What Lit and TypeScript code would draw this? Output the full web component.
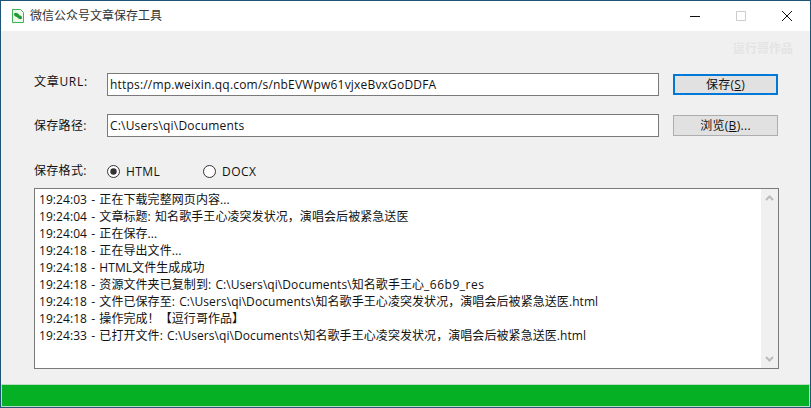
import { LitElement, html, css } from "lit";
import { customElement } from "lit/decorators.js";

const LOGS = [
  html`19:24:03 - 正在下载完整网页内容...`,
  html`19:24:04 - 文章标题: 知名歌手王心凌突发状况，演唱会后被紧急送医`,
  html`19:24:04 - 正在保存...`,
  html`19:24:18 - 正在导出文件...`,
  html`19:24:18 - HTML文件生成成功`,
  html`19:24:18 - 资源文件夹已复制到: C:\\Users\\qi\\Documents\\知名歌手王心<span class="tail">_66b9_res</span>`,
  html`19:24:18 - 文件已保存至: C:\\Users\\qi\\Documents\\知名歌手王心凌突发状况，演唱会后被紧急送医.html`,
  html`19:24:18 - 操作完成！【逗行哥作品】`,
  html`19:24:33 - 已打开文件: C:\\Users\\qi\\Documents\\知名歌手王心凌突发状况，演唱会后被紧急送医.html`,
];

@customElement("app-root")
export class AppRoot extends LitElement {
  static styles = css`
    :host {
      display: block;
      width: 811px;
      height: 408px;
      font-family: "Open Sans", "Noto Sans CJK SC", sans-serif;
      font-size: 12px;
      color: #111;
    }
    * { box-sizing: border-box; }
    .window {
      width: 811px;
      height: 408px;
      border: 1px solid #1d5478;
      background: #f0f0f0;
      display: flex;
      flex-direction: column;
    }
    .titlebar {
      height: 30px;
      background: #fff;
      display: flex;
      align-items: center;
      flex: none;
    }
    .appicon { margin-left: 10px; width: 14px; height: 14px; flex: none; display: block; }
    .title { margin-left: 5px; font-size: 12px; color: #333; line-height: 16px; }
    .caption { margin-left: auto; display: flex; }
    .cap { width: 46px; height: 30px; display: flex; align-items: center; justify-content: center; }
    .watermark {
      height: 42px;
      padding: 10px 17px 0 0;
      text-align: right;
      font-size: 12px;
      font-weight: 700;
      line-height: 16px;
      color: #e4e4e4;
      flex: none;
    }
    .content { padding: 0 32px 0 33px; flex: 1; display: flex; flex-direction: column; }
    .row { display: flex; align-items: center; height: 23px; }
    .row + .row { margin-top: 18px; }
    .label { width: 73px; flex: none; line-height: 16px; letter-spacing: 0.3px; }
    .label.up { margin-bottom: 6px; letter-spacing: 0.7px; }
    .field {
      width: 552px;
      height: 23px;
      border: 1px solid #7a7a7a;
      background: #fff;
      padding: 0 2px;
      line-height: 21px;
      font-size: 12px;
      letter-spacing: 0.19px;
      flex: none;
      white-space: nowrap;
      overflow: hidden;
    }
    .btn {
      margin-left: 14px;
      width: 105px;
      height: 21px;
      border: 1px solid #adadad;
      background: #e1e1e1;
      text-align: center;
      line-height: 19px;
      font-size: 12px;
      letter-spacing: 0.3px;
      flex: none;
      white-space: nowrap;
    }
    .btn.primary { border: 2px solid #0078d7; line-height: 17px; }
    u { text-underline-offset: 1px; }
    .format { display: flex; align-items: flex-start; height: 19px; margin-top: 23px; }
    .format .label { width: 73px; margin-top: 3px; }
    .radio { display: flex; align-items: center; width: 96px; height: 19px; padding-top: 3px; letter-spacing: 0.45px; }
    .dot { width: 13px; height: 13px; display: block; flex: none; margin-right: 6px; }
    .log {
      margin-top: 9px;
      width: 745px;
      height: 181px;
      border: 1px solid #7a7a7a;
      background: #fff;
      display: flex;
      overflow: hidden;
      flex: none;
    }
    .lines { flex: 1; padding: 2px 0 0 4px; font-size: 12px; line-height: 17px; min-width: 0; letter-spacing: 0.07px; word-spacing: 1px; }
    .line { white-space: nowrap; height: 17px; }
    .tail { letter-spacing: 0.5px; }
    .scroll {
      width: 17px;
      flex: none;
      background: #f0f0f0;
      display: flex;
      flex-direction: column;
      justify-content: space-between;
      align-items: center;
      padding: 6px 0;
    }
    .scroll svg { display: block; }
    .progress {
      height: 23px;
      flex: none;
      background: #06b025;
      border: 1px solid #bcdcc2;
    }
  `;

  render() {
    return html`
      <div class="window">
        <div class="titlebar">
          <svg class="appicon" viewBox="0 0 14 14">
            <path d="M1.5 .5H9.5L12.5 3.5V13.5H1.5Z" fill="#eef8ee" stroke="#3db54a"/>
            <ellipse cx="5.6" cy="6" rx="2.8" ry="1.9" transform="rotate(25 5.6 6)" fill="#1f9a35"/>
            <ellipse cx="8.6" cy="8.2" rx="2.6" ry="1.8" transform="rotate(25 8.6 8.2)" fill="#1f9a35"/>
          </svg>
          <div class="title">微信公众号文章保存工具</div>
          <div class="caption">
            <div class="cap">
              <svg width="10" height="10" viewBox="0 0 10 10"><path d="M0 5.5H10" stroke="#111" fill="none"/></svg>
            </div>
            <div class="cap">
              <svg width="10" height="10" viewBox="0 0 10 10"><path d="M.5 .5H9.5V9.5H.5Z" stroke="#ccc" fill="none"/></svg>
            </div>
            <div class="cap">
              <svg width="10" height="10" viewBox="0 0 10 10"><path d="M0 0L10 10M10 0L0 10" stroke="#111" fill="none"/></svg>
            </div>
          </div>
        </div>
        <div class="watermark">逗行哥作品</div>
        <div class="content">
          <div class="row">
            <div class="label up">文章URL:</div>
            <div class="field">https://mp.weixin.qq.com/s/nbEVWpw61vjxeBvxGoDDFA</div>
            <div class="btn primary">保存(<u>S</u>)</div>
          </div>
          <div class="row">
            <div class="label">保存路径:</div>
            <div class="field">C:\\Users\\qi\\Documents</div>
            <div class="btn">浏览(<u>B</u>)...</div>
          </div>
          <div class="format">
            <div class="label">保存格式:</div>
            <div class="radio">
              <svg class="dot" viewBox="0 0 13 13"><circle cx="6.5" cy="6.5" r="6" fill="#fff" stroke="#333"/><circle cx="6.5" cy="6.5" r="3.2" fill="#333"/></svg>
              HTML
            </div>
            <div class="radio">
              <svg class="dot" viewBox="0 0 13 13"><circle cx="6.5" cy="6.5" r="6" fill="#fff" stroke="#333"/></svg>
              DOCX
            </div>
          </div>
          <div class="log">
            <div class="lines">${LOGS.map((l) => html`<div class="line">${l}</div>`)}</div>
            <div class="scroll">
              <svg width="9" height="6" viewBox="0 0 9 6"><path d="M1 5L4.5 1.5L8 5" stroke="#bbb" stroke-width="2" fill="none"/></svg>
              <svg width="9" height="6" viewBox="0 0 9 6"><path d="M1 1L4.5 4.5L8 1" stroke="#bbb" stroke-width="2" fill="none"/></svg>
            </div>
          </div>
        </div>
        <div class="progress"></div>
      </div>
    `;
  }
}
